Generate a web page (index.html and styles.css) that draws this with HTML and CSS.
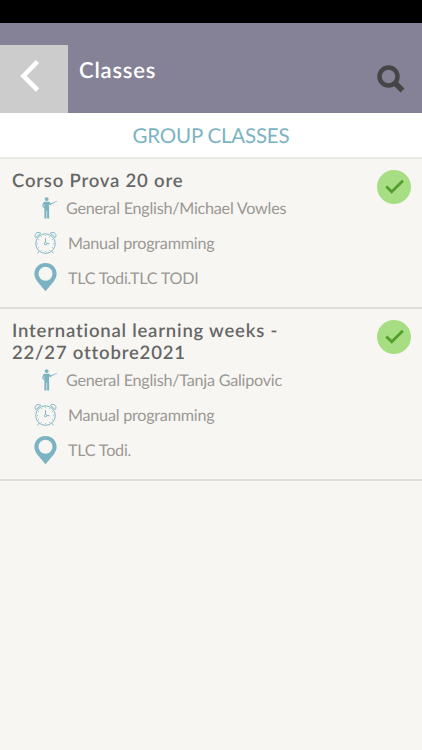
FILE: index.html
```
<!DOCTYPE html>
<html lang="en">
<head>
    <meta charset="UTF-8">
    <meta name="viewport" content="width=device-width, initial-scale=1.0">
    <title>Classes</title>
    <link rel="stylesheet" href="styles.css">
</head>
<body>
    <!-- shared icons -->
    <svg class="icons" width="0" height="0">
        <symbol id="teacher" viewBox="0 0 18 24">
            <circle cx="6" cy="2.6" r="2.1"/>
            <path d="M3.3 5.3h5.5l1.4 1.9 6.5-2.6.2.4-5.7 2.9-1.1 1.2-1.5-1V23H6.5v-8h-.7v8H3.6V12.6L1.2 10.2l.6-2.6z"/>
            <path d="M3.5 8.3l-.7 1.5 1 1.2" fill="none" stroke="#f7f6f2" stroke-width=".7"/>
        </symbol>
        <symbol id="clock" viewBox="0 0 24 24">
            <g fill="none" stroke="currentColor" stroke-width="1">
                <circle cx="12" cy="12.6" r="10.2"/>
                <path d="M1.9 6.4C-.6 3.2 3.2-.7 7 1.8L1.9 6.4zM22.1 6.4C24.6 3.2 20.8-.7 17 1.8l5.1 4.6z"/>
                <path d="M12 7v4.4M13.4 12.7h2.8M5.4 20.6l-1.8 2.2M18.6 20.6l1.8 2.2"/>
                <circle cx="12" cy="12.7" r="1.2"/>
                <path d="M12 3.6v1.3M12 20.3v1.3M3 12.6h1.3M19.7 12.6H21M7.5 4.8l.6 1.1M16.5 4.8l-.6 1.1M4.2 8.1l1.1.6M19.8 8.1l-1.1.6M4.2 17.1l1.1-.6M19.8 17.1l-1.1-.6M7.5 20.4l.6-1.1M16.5 20.4l-.6-1.1" stroke-width=".7"/>
            </g>
        </symbol>
        <symbol id="pin" viewBox="0 0 24 30">
            <path fill-rule="evenodd" d="M12 .5C5.6.5.4 5.4.4 11.6c0 3 1.2 5.5 3 8L12 29.8l8.6-10.2c1.8-2.5 3-5 3-8C23.6 5.4 18.4.5 12 .5zM12 4.3a7.3 7.3 0 1 1 0 14.6 7.3 7.3 0 0 1 0-14.6z"/>
        </symbol>
        <symbol id="check" viewBox="0 0 34 34">
            <path d="M9.3 16.5l5.4 5.2L25.9 10.8" fill="none" stroke="#539e2d" stroke-width="2.8"/>
        </symbol>
    </svg>

    <div class="status-bar"></div>
    <header class="header">
        <a class="back" aria-label="Back">
            <svg width="20" height="34" viewBox="0 0 20 34">
                <path d="M17.5 2.5L3.5 17l14 14" fill="none" stroke="#fff" stroke-width="4.6"/>
            </svg>
        </a>
        <h1>Classes</h1>
        <a class="search" aria-label="Search">
            <svg width="28" height="28" viewBox="0 0 28 28">
                <circle cx="11.5" cy="11.5" r="9" fill="none" stroke="#454545" stroke-width="4.4"/>
                <path d="M17.5 17.5l8 8" stroke="#454545" stroke-width="5.4"/>
            </svg>
        </a>
    </header>
    <h2 class="section-title">GROUP CLASSES</h2>

    <div class="class-list">
        <div class="class-item">
            <div class="class-info">
                <h3>Corso Prova 20 ore</h3>
                <div class="row teacher"><svg><use href="#teacher"/></svg><span>General English/Michael Vowles</span></div>
                <div class="row clock"><svg><use href="#clock"/></svg><span>Manual programming</span></div>
                <div class="row pin"><svg><use href="#pin"/></svg><span>TLC Todi.TLC TODI</span></div>
            </div>
            <div class="status"><svg><use href="#check"/></svg></div>
        </div>
        <div class="class-item">
            <div class="class-info">
                <h3>International learning weeks - 22/27 ottobre2021</h3>
                <div class="row teacher"><svg><use href="#teacher"/></svg><span>General English/Tanja Galipovic</span></div>
                <div class="row clock"><svg><use href="#clock"/></svg><span>Manual programming</span></div>
                <div class="row pin"><svg><use href="#pin"/></svg><span>TLC Todi.</span></div>
            </div>
            <div class="status"><svg><use href="#check"/></svg></div>
        </div>
    </div>
</body>
</html>
```
FILE: styles.css
```
* {
    box-sizing: border-box;
}
body {
    margin: 0;
    min-height: 750px;
    font-family: Lato, sans-serif;
    text-rendering: geometricPrecision;
    background-color: #f7f6f2;
    color: #9b9894;
}
h1, h2, h3 {
    margin: 0;
}
svg {
    display: block;
}
.icons {
    position: absolute;
}
.status-bar {
    height: 22.5px;
    background: #000;
}
.header {
    display: flex;
    align-items: flex-end;
    height: 90px;
    background: #858297;
}
.back {
    display: flex;
    align-items: center;
    width: 68px;
    height: 67.5px;
    padding: 0 0 6px 20px;
    background: #ccc;
}
.header h1 {
    flex: 1;
    margin-left: 11px;
    padding-bottom: 30px;
    font-size: 22px;
    line-height: 26px;
    font-weight: 600;
    letter-spacing: 0.8px;
    color: #fff;
}
.search {
    margin-right: 17.5px;
    padding-bottom: 20px;
}
.section-title {
    height: 46px;
    border-bottom: 2px solid #e8e8e7;
    background: #fff;
    color: #7bb3c2;
    font-size: 20.5px;
    line-height: 46px;
    font-weight: 400;
    letter-spacing: -0.2px;
    text-align: center;
}
.class-item {
    display: flex;
    justify-content: space-between;
    padding: 11px 11.5px 11px 12px;
    border-bottom: 2px solid #e0dfdd;
}
.class-info {
    width: 290px;
}
.class-item h3 {
    color: #666;
    font-size: 18.5px;
    line-height: 21.7px;
    font-weight: 600;
    letter-spacing: 0.8px;
}
.row {
    display: flex;
    align-items: center;
    height: 34.9px;
    padding-left: 22px;
    font-size: 16.2px;
    letter-spacing: -0.25px;
    white-space: nowrap;
}
.row svg {
    width: 23px;
    height: 24px;
    margin: 0 11px 2px 0;
    fill: #7bb3c2;
    color: #7bb3c2;
}
.row.teacher svg {
    width: 17px;
    height: 24px;
    margin: 0 8px 2px 7px;
}
.row.pin svg {
    height: 30px;
}
.status {
    width: 34px;
    height: 34px;
    border-radius: 50%;
    background: #a7de83;
}
.status svg {
    width: 34px;
    height: 34px;
}
```
